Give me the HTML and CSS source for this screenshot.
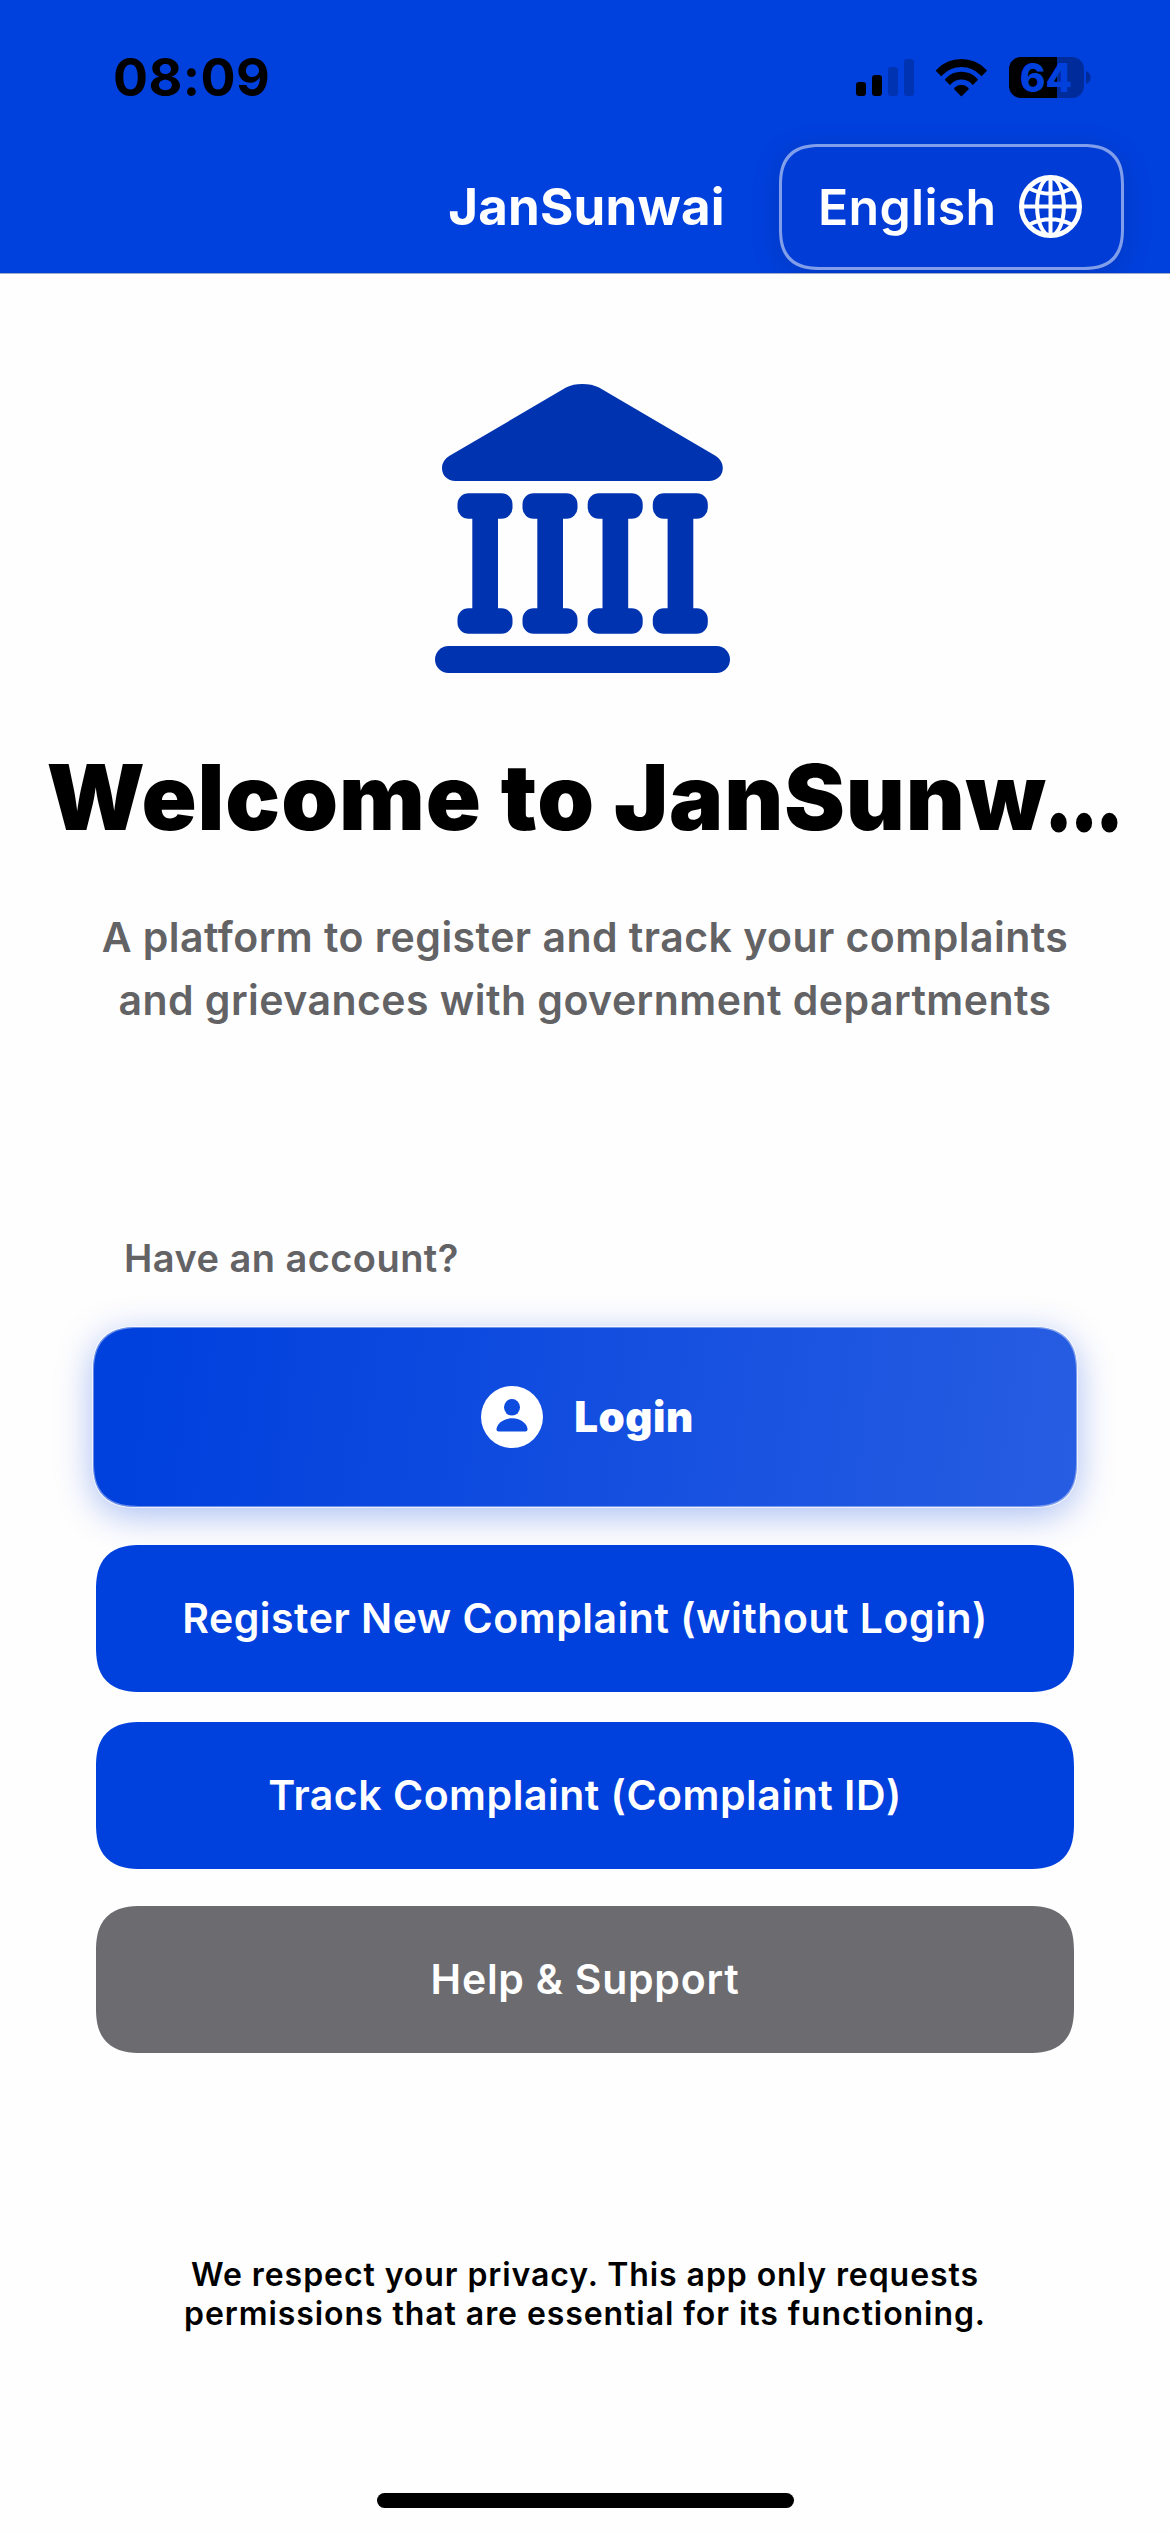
FILE: index.html
```html
<!DOCTYPE html>
<html lang="en">
<head>
<meta charset="utf-8">
<title>JanSunwai</title>
<link rel="stylesheet" href="styles.css">
</head>
<body>
<header class="header">
  <div class="status-bar">
    <span class="time">08:09</span>
    <div class="indicators">
      <svg class="signal" width="58" height="37" viewBox="0 0 58 37">
        <rect x="0" y="23" width="10" height="14" rx="3"/>
        <rect x="16" y="16" width="10" height="21" rx="3"/>
        <rect class="dim" x="32" y="8" width="10" height="29" rx="3"/>
        <rect class="dim" x="48" y="0" width="10" height="37" rx="3"/>
      </svg>
      <svg class="wifi" width="51" height="38" viewBox="0 0 51 38">
        <clipPath id="wedge"><path d="M25.4 37.4L-12.6 -.6H63.4Z"/></clipPath>
        <g clip-path="url(#wedge)">
          <circle cx="25.4" cy="34.5" r="30.4" fill="none" stroke="#000" stroke-width="8"/>
          <circle cx="25.4" cy="34.5" r="17.9" fill="none" stroke="#000" stroke-width="7.6"/>
          <circle cx="25.4" cy="34.9" r="9.2"/>
        </g>
      </svg>
      <div class="battery">
        <span class="battery-level">64</span>
      </div>
      <svg class="battery-tip" width="5" height="13" viewBox="0 0 5 13"><path d="M0 0C2.6 .9 4.6 3.4 4.6 6.5S2.6 12.1 0 13Z"/></svg>
    </div>
  </div>
  <nav class="nav">
    <h2 class="nav-title">JanSunwai</h2>
    <button class="language">
      <span>English</span>
      <svg width="63" height="63" viewBox="0 0 63 63" fill="none" stroke="#fff" stroke-width="4">
        <circle cx="31.5" cy="31.5" r="29" stroke-width="5"/>
        <ellipse cx="31.5" cy="31.5" rx="13.4" ry="29"/>
        <path d="M31.5 2V61M2 31.5H61M9.5 13Q31.5 24.5 53.5 13M9.5 50Q31.5 38.5 53.5 50"/>
      </svg>
    </button>
  </nav>
</header>
<main class="main">
  <svg class="building" width="295" height="289" viewBox="0 0 295 289" fill="#0033b0">
    <path d="M131 3.6C136 1 141 0 147.3 0S159 1 164 3.6L280 71.5C285 74.5 287.8 79 287.8 84C287.8 91.5 282 97 274 97H20.500C12.500 97 7 91.500 7 84C7 79 9.800 74.500 15 71.500Z"/>
    <g id="column">
      <rect x="22.500" y="109.300" width="55" height="25.500" rx="11"/>
      <rect x="37.300" y="120" width="25.700" height="118"/>
      <rect x="22.500" y="224.300" width="55" height="25.500" rx="11"/>
    </g>
    <use href="#column" x="65"/>
    <use href="#column" x="130.200"/>
    <use href="#column" x="195.300"/>
    <rect x="0" y="262" width="295" height="27" rx="13.500"/>
  </svg>
  <h1 class="title">Welcome to JanSunw<span class="ellipsis">…</span></h1>
  <p class="subtitle">A platform to register and track your complaints<br>and grievances with government departments</p>
  <p class="prompt">Have an account?</p>
  <button class="login">
    <svg width="62" height="62" viewBox="0 0 62 62">
      <circle cx="31" cy="31" r="31" fill="#fff"/>
      <g fill="#0e4ce0">
        <ellipse cx="31" cy="21.300" rx="8" ry="8.300"/>
        <path d="M15.500 43.500C15.500 38.500 21.500 32.300 31 32.300S46.500 38.500 46.500 43.500Q46.500 45.600 44.400 45.600H17.600Q15.500 45.600 15.500 43.500Z"/>
      </g>
    </svg>
    <span>Login</span>
  </button>
  <button class="action register">Register New Complaint (without Login)</button>
  <button class="action track">Track Complaint (Complaint ID)</button>
  <button class="action help">Help &amp; Support</button>
  <p class="privacy">We respect your privacy. This app only requests<br>permissions that are essential for its functioning.</p>
</main>
<div class="home-indicator"></div>
</body>
</html>
```
FILE: styles.css
```css
* { box-sizing: border-box; margin: 0; padding: 0; }

body {
  display: flex;
  flex-direction: column;
  width: 1170px;
  height: 2532px;
  background: #fefefe;
  color: #000;
  font-family: Inter, "Noto Sans", sans-serif;
  overflow: hidden;
}

button { border: 0; color: #fff; font-family: inherit; }
svg { display: block; flex: none; }

.header {
  height: 274px;
  flex: none;
  background: #0040dd;
  border-bottom: 1px solid #a3abc4;
  overflow: hidden;
}

.status-bar {
  display: flex;
  justify-content: space-between;
  height: 132px;
  padding: 46px 79px 0 113px;
}
.time { font-size: 52px; font-weight: 700; line-height: 64px; letter-spacing: .4px; }
.indicators { display: flex; align-items: flex-start; padding-top: 11px; }
.signal { margin: 2px 22.500px 0 0; }
.signal .dim { fill: #0033b1; }
.wifi { margin: 2px 21.500px 0 0; }
.battery {
  display: flex;
  justify-content: center;
  width: 75px;
  height: 41px;
  border-radius: 12px;
  background: linear-gradient(90deg, #000 48px, #002c9b 48px);
}
.battery-level {
  color: #0040dd;
  font-size: 39px;
  font-weight: 800;
  line-height: 41px;
}
.battery-tip { margin: 14px 0 0 2.500px; fill: #002c9b; }

.nav {
  display: grid;
  grid-template-columns: 1fr auto 1fr;
  align-items: center;
  padding-top: 12px;
}
.nav-title {
  grid-column: 2;
  padding: 0 0 1px 3px;
  color: #fff;
  font-size: 51px;
  font-weight: 700;
  line-height: 60px;
  letter-spacing: .2px;
}
.language {
  justify-self: end;
  display: flex;
  align-items: center;
  justify-content: space-between;
  width: 345px;
  height: 126px;
  margin-right: 46px;
  padding: 0 39.500px 1px 36px;
  border: 3px solid rgba(255, 255, 255, .5);
  border-radius: 42px;
  corner-shape: superellipse(1.38);
  background: #003cd5;
  box-shadow: 0 6px 30px rgba(0, 0, 0, .13);
  font-size: 50px;
  font-weight: 600;
  letter-spacing: .3px;
}

.main {
  display: flex;
  flex-direction: column;
  padding: 110px 96px 0;
}
.building { align-self: center; margin-left: -5px; }
.title {
  margin: 70px -96px 0;
  text-align: center;
  font-size: 91px;
  font-weight: 870;
  line-height: 109px;
  letter-spacing: .9px;
  white-space: nowrap;
}
.ellipsis {
  display: inline-block;
  margin-right: -17px;
  font-size: 84px;
  line-height: 1;
  letter-spacing: 0;
  transform: scaleX(.81);
  transform-origin: left;
  -webkit-text-stroke: 3px #000;
}
.subtitle {
  margin-top: 54px;
  color: #636366;
  text-align: center;
  font-size: 41px;
  font-weight: 600;
  line-height: 63px;
  letter-spacing: .47px;
}
.prompt {
  margin: 203px 0 0 28px;
  color: #636366;
  font-size: 38px;
  font-weight: 600;
  line-height: 46px;
  letter-spacing: .45px;
}
.login {
  display: flex;
  align-items: center;
  justify-content: center;
  gap: 31px;
  height: 180px;
  margin: 46px -3px 0;
  padding: 0 0 1px 5px;
  border-radius: 46px;
  corner-shape: superellipse(1.38);
  background: linear-gradient(97deg, #0040dd 5%, #275de2);
  box-shadow:
    inset 0 0 0 1px rgba(255, 255, 255, .4),
    0 0 0 1px rgba(255, 255, 255, .6),
    0 8px 36px rgba(0, 64, 221, .35);
  font-size: 42px;
  font-weight: 880;
  letter-spacing: .5px;
}
.action {
  height: 147px;
  padding-bottom: 2px;
  border-radius: 46px;
  corner-shape: superellipse(1.38);
  background: #0040dd;
  font-size: 41px;
  font-weight: 600;
  line-height: 50px;
  letter-spacing: .51px;
}
.register { margin-top: 38px; }
.track { margin-top: 30px; }
.help { margin-top: 37px; background: #6c6c70; letter-spacing: .75px; }
.privacy {
  margin-top: 202px;
  text-align: center;
  font-size: 32px;
  font-weight: 600;
  line-height: 39px;
  letter-spacing: .93px;
}
.home-indicator {
  width: 417px;
  height: 15px;
  margin: auto auto 24px;
  border-radius: 8px;
  background: #000;
}
```
